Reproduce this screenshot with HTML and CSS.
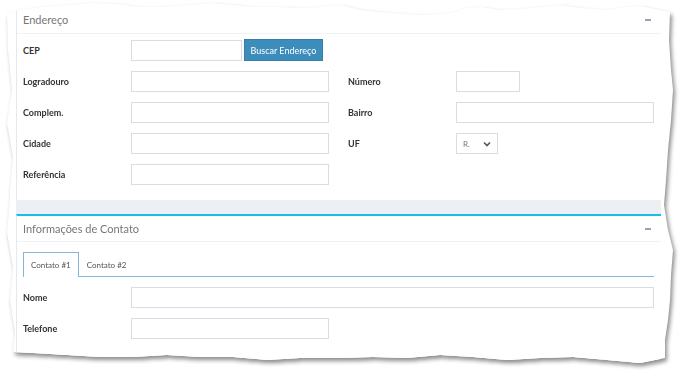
FILE: index.html
```html
<!DOCTYPE html>
<html lang="pt-BR">
  <head>
    <meta charset="UTF-8" />
    <meta name="viewport" content="width=device-width, initial-scale=1.0" />
    <title>Cadastro - Endereço e Contato</title>
    <link rel="stylesheet" href="styles.css">
  </head>
  <body>
    <div class="sheet">
      <div class="paper">
        <div class="content">
          <div class="box">
            <div class="box-header box-header-first">
              <h3 class="box-title">Endereço</h3>
              <span class="collapse-btn"></span>
            </div>
            <div class="box-body">
              <div class="row">
                <div class="field">
                  <label class="field-label">CEP</label>
                  <div class="control">
                    <input type="text" class="input input-cep" />
                    <button type="button" class="btn-primary">Buscar Endereço</button>
                  </div>
                </div>
              </div>
              <div class="row">
                <div class="field">
                  <label class="field-label">Logradouro</label>
                  <div class="control"><input type="text" class="input" /></div>
                </div>
                <div class="field">
                  <label class="field-label">Número</label>
                  <div class="control"><input type="text" class="input input-numero" /></div>
                </div>
              </div>
              <div class="row">
                <div class="field">
                  <label class="field-label">Complem.</label>
                  <div class="control"><input type="text" class="input" /></div>
                </div>
                <div class="field">
                  <label class="field-label">Bairro</label>
                  <div class="control"><input type="text" class="input" /></div>
                </div>
              </div>
              <div class="row">
                <div class="field">
                  <label class="field-label">Cidade</label>
                  <div class="control"><input type="text" class="input" /></div>
                </div>
                <div class="field">
                  <label class="field-label">UF</label>
                  <div class="control">
                    <div class="select-uf">
                      <span class="select-value">R.</span>
                      <svg class="chevron" width="8" height="6" viewBox="0 0 8 6">
                        <path d="M1 1.5 L4 4.5 L7 1.5" fill="none" stroke="#555" stroke-width="1.6" />
                      </svg>
                    </div>
                  </div>
                </div>
              </div>
              <div class="row">
                <div class="field">
                  <label class="field-label">Referência</label>
                  <div class="control"><input type="text" class="input" /></div>
                </div>
              </div>
            </div>
          </div>

          <div class="box box-info">
            <div class="box-header">
              <h3 class="box-title">Informações de Contato</h3>
              <span class="collapse-btn"></span>
            </div>
            <div class="box-body box-body-tabs">
              <ul class="tabs">
                <li class="tab active">Contato #1</li>
                <li class="tab">Contato #2</li>
              </ul>
              <div class="row">
                <div class="field field-wide">
                  <label class="field-label">Nome</label>
                  <div class="control"><input type="text" class="input" /></div>
                </div>
              </div>
              <div class="row">
                <div class="field">
                  <label class="field-label">Telefone</label>
                  <div class="control"><input type="text" class="input" /></div>
                </div>
              </div>
            </div>
          </div>
        </div>
      </div>
    </div>
  </body>
</html>
```

FILE: styles.css
```css
body {
  margin: 0;
  background-color: #fff;
  font-family: Lato, "Open Sans", sans-serif;
}
.sheet {
  width: 684px;
  height: 376px;
  filter: drop-shadow(2px 3px 2px rgba(0, 0, 0, 0.45));
}
.paper {
  width: 684px;
  height: 376px;
  background-color: #fff;
  padding: 0 23px 0 16px;
  box-sizing: border-box;
  overflow: hidden;
  clip-path: polygon(
    7px 13px, 20px 10px, 40px 7px, 67px 5px, 93px 3px, 117px 4px, 140px 7px,
    160px 7px, 187px 5px, 213px 3px, 233px 5px, 253px 7px, 277px 7px,
    300px 8px, 320px 7px, 340px 5px, 360px 10px, 390px 13px, 423px 15px,
    450px 13px, 467px 8px, 480px 7px, 500px 10px, 520px 9px, 540px 7px,
    560px 5px, 580px 8px, 607px 10px, 627px 7px, 640px 6px, 660px 10px,
    670px 12px, 669px 40px, 671px 70px, 673px 90px, 671px 120px,
    668px 150px, 666px 180px, 664px 205px, 668px 230px, 673px 250px,
    671px 275px, 670px 300px, 668px 320px, 665px 340px, 665px 358px,
    640px 363px, 607px 360px, 573px 357px, 540px 358px, 507px 360px,
    473px 357px, 440px 355px, 407px 358px, 373px 357px, 340px 358px,
    300px 358px, 267px 360px, 233px 357px, 200px 357px, 167px 355px,
    133px 357px, 100px 357px, 67px 355px, 33px 353px, 13px 352px,
    15px 333px, 10px 300px, 13px 267px, 7px 233px, 10px 200px,
    10px 190px, 13px 157px, 7px 123px, 12px 90px, 8px 50px
  );
}
.content {
  height: 100%;
  background-color: #eceff3;
}
.box {
  background-color: #fff;
  border-left: 1px solid #e6e8ec;
  margin-bottom: 14px;
}
.box-info {
  border-top: 2px solid #1cbde8;
  height: 200px;
}
.box-header {
  display: flex;
  align-items: center;
  justify-content: space-between;
  height: 25px;
  padding: 0 10px 0 6px;
  border-bottom: 1px solid #f1f2f4;
}
.box-header-first {
  height: 27px;
  padding-top: 6px;
}
.box-title {
  margin: 0;
  font-size: 11px;
  font-weight: normal;
  color: #777;
}
.collapse-btn {
  width: 6px;
  height: 2px;
  background-color: #9aa3b5;
}
.box-body {
  display: flex;
  flex-direction: column;
  gap: 10px;
  padding: 6px 7px 15px 6px;
}
.box-body-tabs {
  padding-top: 10px;
}
.row {
  display: flex;
  gap: 19px;
  height: 21px;
}
.field {
  display: flex;
  align-items: center;
}
.field-wide {
  flex: 1;
}
.field-label {
  width: 108px;
  font-size: 9px;
  font-weight: bold;
  color: #333;
}
.control {
  display: flex;
  align-items: center;
  gap: 2px;
  width: 198px;
  height: 21px;
}
.field-wide .control {
  flex: 1;
}
.input {
  width: 100%;
  height: 21px;
  margin: 0;
  padding: 0 6px;
  border: 1px solid #d9dce2;
  box-sizing: border-box;
  background-color: #fff;
}
.input-cep {
  width: 111px;
}
.input-numero {
  width: 64px;
}
.btn-primary {
  width: 79px;
  height: 22px;
  margin-top: -1px;
  padding: 0;
  background-color: #3c8dbc;
  border: 1px solid #367fa9;
  color: #fff;
  font-family: Lato, "Open Sans", sans-serif;
  font-size: 9px;
}
.select-uf {
  display: flex;
  align-items: center;
  justify-content: space-between;
  width: 42px;
  height: 21px;
  padding: 0 6px 0 6px;
  box-sizing: border-box;
  border: 1px solid #d9dce2;
}
.select-value {
  font-size: 8px;
  color: #777;
}
.tabs {
  display: flex;
  margin: 0;
  padding: 0;
  list-style: none;
  height: 24px;
  border-bottom: 1px solid #86b6d6;
}
.tab {
  display: flex;
  align-items: center;
  padding: 0 7px;
  font-size: 8px;
  color: #555;
  border: 1px solid transparent;
  border-bottom: none;
}
.tab.active {
  border-color: #86b6d6;
  background-color: #fff;
  margin-bottom: -1px;
}
```
